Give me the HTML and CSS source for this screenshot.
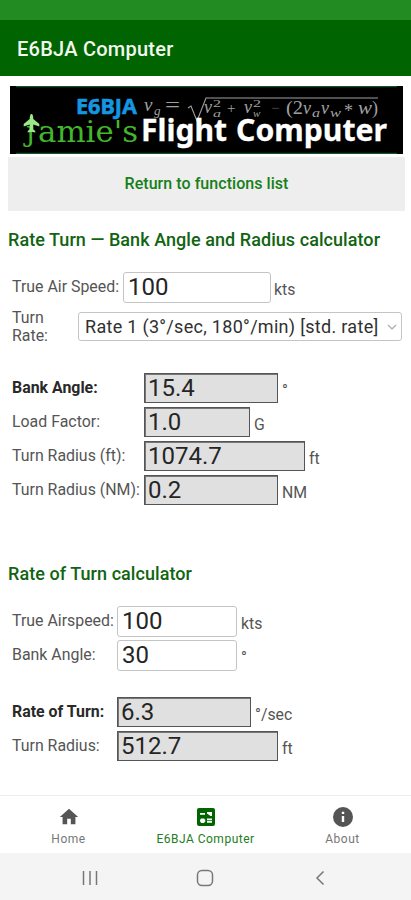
FILE: index.html
```html
<!DOCTYPE html>
<html lang="en">
<head>
<meta charset="utf-8">
<title>E6BJA Computer</title>
<link rel="stylesheet" href="styles.css">
</head>
<body>
<div class="status"></div>
<header class="appbar">E6BJA Computer</header>
<main class="content">
  <svg class="banner" viewBox="0 0 393 68" width="393" height="68">
    <rect width="393" height="68" fill="#000"/>
    <path d="M6 .7H387M6 67.3H387" stroke="#12522b" stroke-width="1.2"/>
    <text class="b-code" x="66" y="27.500" textLength="61" lengthAdjust="spacingAndGlyphs">E6BJA</text>
    <g class="formula">
      <text class="it" x="134" y="25" font-size="19">v</text>
      <text class="it" x="144" y="29" font-size="13">g</text>
      <text x="155" y="26" font-size="20" textLength="15" lengthAdjust="spacingAndGlyphs">=</text>
      <path d="M178 22l3-2 6 15 9-23H368" fill="none" stroke="#a0a0a0" stroke-width="1.1"/>
      <text class="it" x="194" y="27" font-size="18">v</text>
      <text x="203" y="21" font-size="11" textLength="8" lengthAdjust="spacingAndGlyphs">2</text>
      <text class="it" x="203" y="31" font-size="11" textLength="8" lengthAdjust="spacingAndGlyphs">a</text>
      <text x="217" y="27" font-size="15">+</text>
      <text class="it" x="234" y="27" font-size="18">v</text>
      <text x="243" y="21" font-size="11" textLength="8" lengthAdjust="spacingAndGlyphs">2</text>
      <text class="it" x="243" y="31" font-size="11">w</text>
      <text x="261" y="27" font-size="15" fill="#555">−</text>
      <text x="276" y="28" font-size="18" textLength="17" lengthAdjust="spacingAndGlyphs">(2</text>
      <text class="it" x="293" y="28" font-size="18">v</text>
      <text class="it" x="302" y="31" font-size="13" textLength="8" lengthAdjust="spacingAndGlyphs">a</text>
      <text class="it" x="311" y="28" font-size="18">v</text>
      <text class="it" x="320" y="31" font-size="13" textLength="11" lengthAdjust="spacingAndGlyphs">w</text>
      <text x="334" y="31" font-size="18">*</text>
      <text class="it" x="348" y="28" font-size="18" textLength="14" lengthAdjust="spacingAndGlyphs">w</text>
      <text x="362" y="28" font-size="18">)</text>
    </g>
    <text class="b-jamie b-j" x="16" y="55">ȷ</text>
    <text class="b-jamie" x="28" y="55.500" textLength="100" lengthAdjust="spacingAndGlyphs">amie's</text>
    <path d="M21.500 28c1.200 0 1.800 2 1.800 5l6 5v2.500l-6-2v5l2 1.500v1.500l-3.800-.8-3.800.8v-1.500l2-1.500v-5l-6 2V38l6-5c0-3 .6-5 1.800-5z" fill="#9be889"/>
    <text class="b-title" x="131" y="54.500" textLength="86" lengthAdjust="spacingAndGlyphs">Flight</text>
    <text class="b-title" x="226" y="54.500" textLength="151" lengthAdjust="spacingAndGlyphs">Computer</text>
  </svg>
  <a class="return"><span>Return to functions list</span></a>

  <h2 class="title t1">Rate Turn — Bank Angle and Radius calculator</h2>
  <div class="row">
    <label class="label l-speed">True Air Speed:</label><div class="field w148">100</div><span class="unit">kts</span>
  </div>
  <div class="row select-row">
    <label class="label l-rate">Turn<br>Rate:</label>
    <div class="select"><span>Rate 1 (3°/sec, 180°/min) [std. rate]</span>
      <svg width="10" height="6" viewBox="0 0 10 6"><path d="M1 1l4 4 4-4" fill="none" stroke="#aaa" stroke-width="1.2"/></svg>
    </div>
  </div>

  <section class="outputs first">
    <div class="row"><label class="label l-wide strong">Bank Angle:</label><div class="field out w134">15.4</div><span class="unit">°</span></div>
    <div class="row"><label class="label l-wide">Load Factor:</label><div class="field out w106">1.0</div><span class="unit">G</span></div>
    <div class="row"><label class="label l-wide">Turn Radius (ft):</label><div class="field out w161">1074.7</div><span class="unit">ft</span></div>
    <div class="row"><label class="label l-wide">Turn Radius (NM):</label><div class="field out w134">0.2</div><span class="unit">NM</span></div>
  </section>

  <h2 class="title t2">Rate of Turn calculator</h2>
  <div class="row"><label class="label l-mid">True Airspeed:</label><div class="field w120">100</div><span class="unit">kts</span></div>
  <div class="row"><label class="label l-mid">Bank Angle:</label><div class="field w120">30</div><span class="unit">°</span></div>

  <section class="outputs second">
    <div class="row"><label class="label l-mid strong">Rate of Turn:</label><div class="field out w134">6.3</div><span class="unit">°/sec</span></div>
    <div class="row"><label class="label l-mid">Turn Radius:</label><div class="field out w161">512.7</div><span class="unit">ft</span></div>
  </section>
</main>
<nav class="tabs">
  <a class="tab"><svg width="22" height="22" viewBox="0 0 24 24"><path d="M10 20v-6h4v6h5v-8h3L12 3 2 12h3v8z"/></svg><span>Home</span></a>
  <a class="tab active"><svg width="24" height="24" viewBox="0 0 24 24"><path d="M5 3h14a2 2 0 0 1 2 2v14a2 2 0 0 1-2 2H5a2 2 0 0 1-2-2V5a2 2 0 0 1 2-2z"/><path fill="#fff" d="M6 8h5v1.800H6zM13 7h5v4h-1.500L13 8.500zM6.800 13.500h3.600v4.500H6.800zM13 13.500h5v1.700h-5zM13 16h5v1.700h-5zM6 14.500h5.300v2.200H6z"/></svg><span>E6BJA Computer</span></a>
  <a class="tab"><svg width="24" height="24" viewBox="0 0 24 24"><path d="M12 2a10 10 0 1 0 0 20 10 10 0 0 0 0-20zm1.200 15h-2.400v-6h2.400zm0-8h-2.400V6.800h2.400z"/></svg><span>About</span></a>
</nav>
<footer class="system">
  <svg width="16" height="16" viewBox="0 0 16 16"><path d="M1.500 1v14M8 1v14M14.500 1v14"/></svg>
  <svg width="18" height="18" viewBox="0 0 18 18"><rect x="1.500" y="1.500" width="15" height="15" rx="4.500"/></svg>
  <svg width="10" height="16" viewBox="0 0 10 16"><path d="M8.500 1.500L2 8l6.500 6.500"/></svg>
</footer>
</body>
</html>
```

FILE: styles.css
```css
* { box-sizing: border-box; }
body {
  margin: 0;
  width: 411px;
  height: 900px;
  overflow: hidden;
  display: flex;
  flex-direction: column;
  background: #fff;
  color: #555;
  font-family: Roboto, "Liberation Sans", sans-serif;
}
.status { height: 20px; background: #228b22; }
.appbar {
  height: 56px;
  padding: 2px 17px 0;
  display: flex;
  align-items: center;
  background: #006400;
  color: #f2f8ee;
  font-size: 20px;
  font-weight: 500;
  letter-spacing: 0.25px;
}
.content { flex: 1; padding: 10px 6px 0 8px; display: flex; flex-direction: column; }
.banner { display: block; margin-left: 2px; flex: none; }
.b-code { font: bold 21px "Noto Sans", "DejaVu Sans", sans-serif; fill: #1596e0; stroke: #1596e0; stroke-width: 0.6; stroke-linejoin: round; }
.formula { fill: #a0a0a0; font-family: "Liberation Serif", serif; }
.it { font-style: italic; }
.b-jamie { font: 30px "DejaVu Serif", serif; fill: #43b72b; }
.b-j { font-size: 28px; }
.b-title { font: bold 31px "Noto Sans", "Open Sans", sans-serif; fill: #fff; stroke: #fff; stroke-width: 0.3; }
.return {
  height: 54px;
  margin: 3px 0 0;
  padding-bottom: 2px;
  display: flex;
  align-items: center;
  justify-content: center;
  background: #eee;
  color: #168018;
  font-size: 16px;
  font-weight: 500;
  letter-spacing: 0.05px;
  flex: none;
}
.title {
  margin: 0;
  height: 24px;
  line-height: 24px;
  font-size: 18px;
  font-weight: 500;
  letter-spacing: 0.06px;
  color: #116411;
  white-space: nowrap;
}
.t1 { margin-top: 17px; margin-bottom: 18px; }
.t2 { margin-top: 55px; margin-bottom: 18px; }
.row { height: 34px; display: flex; align-items: center; flex: none; }
.select-row { height: 45px; }
.outputs.first { margin-top: 22px; }
.outputs.second { margin-top: 23px; }
.label { flex: none; padding: 0 0 0 4px; font-size: 15.900px; line-height: 18px; white-space: nowrap; }
.strong { font-weight: 700; color: #292929; }
.l-speed { width: 115px; }
.l-rate { width: 70px; }
.l-wide { width: 136px; }
.l-mid { width: 109px; }
.field {
  height: 31px;
  padding: 0 4px;
  border: 1px solid #c4c4c4;
  border-radius: 3px;
  font-size: 24px;
  line-height: 28px;
  color: #252525;
  flex: none;
}
.out { height: 30px; line-height: 29px; padding-left: 3px; border-color: #555; border-radius: 0; background: #e0e0e0; box-shadow: inset 0 1px #777, inset 1px 0 #777; }
.w148 { width: 148px; }
.w134 { width: 134px; }
.w106 { width: 106px; }
.w161 { width: 161px; }
.w120 { width: 120px; }
.unit { margin-left: 4px; padding-top: 5px; font-size: 15.800px; }
.w148 + .unit { margin-left: 3px; }
.select {
  width: 324px;
  height: 29px;
  padding: 0 4px 0 6px;
  display: flex;
  align-items: center;
  justify-content: space-between;
  border: 1px solid #c4c4c4;
  border-radius: 3px;
  color: #303030;
  font-size: 18px;
  letter-spacing: 0.3px;
  white-space: nowrap;
}
.tabs { height: 58px; border-top: 1px solid #eee; display: flex; justify-content: center; }
.tab {
  width: 137px;
  display: flex;
  flex-direction: column;
  align-items: center;
  padding-top: 9px;
  fill: #555;
  color: #777;
  font-size: 12px;
}
.tab svg { height: 24px; }
.tab span { margin-top: 3px; line-height: 14px; letter-spacing: 0.5px; white-space: nowrap; }
.active { fill: #006400; color: #237d23; }
.system { height: 47px; background: #f4f4f4; display: flex; align-items: center; padding: 2px 86px 0 82px; justify-content: space-between; }
.system svg { fill: none; stroke: #777; stroke-width: 1.500; }
.system svg:nth-child(2) { margin-right: 4px; }
```
